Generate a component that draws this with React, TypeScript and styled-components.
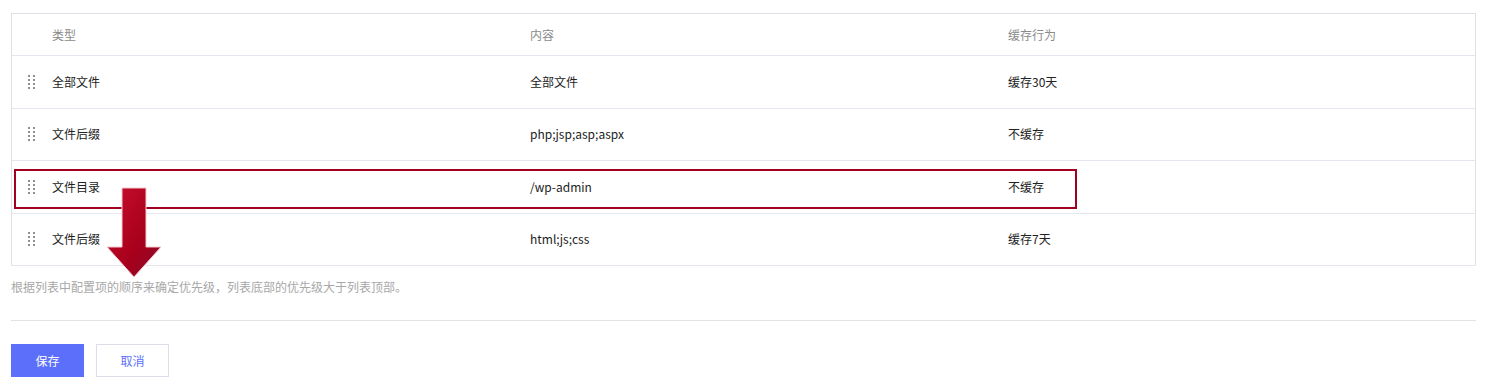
import React from "react";
import styled, { createGlobalStyle } from "styled-components";

const Global = createGlobalStyle`
  html, body { margin: 0; padding: 0; background: #fff; }
  body { font-family: "Noto Sans CJK SC", "Noto Sans", sans-serif; font-size: 12px; color: #222; }
`;

const Page = styled.div`
  position: relative;
  width: 1465px;
  padding: 13px 0 0 11px;
`;

const Table = styled.div`
  border: 1px solid #dfdfe8;
  border-bottom-color: #e6e6ee;
`;

const Row = styled.div<{ $head?: boolean }>`
  display: grid;
  grid-template-columns: 40px 478px 478px 1fr;
  align-items: center;
  height: ${(p) => (p.$head ? "41px" : "51.5px")};
  border-top: ${(p) => (p.$head ? "none" : "1px solid #e6e6ee")};
  color: ${(p) => (p.$head ? "#8a8a8a" : "#222")};
  line-height: 16px;
`;

const Cell = styled.div`
  white-space: nowrap;
`;

const HandleCell = styled.div`
  display: flex;
  justify-content: flex-start;
  padding-left: 16px;
`;

const Dots = styled.div`
  display: grid;
  grid-template-columns: 2px 2px;
  grid-auto-rows: 2px;
  column-gap: 3px;
  row-gap: 2px;
  span { background: #8f8f8f; width: 2px; height: 2px; }
`;

const Hint = styled.div`
  margin-top: 13px;
  color: #a8a8a8;
  line-height: 16px;
`;

const Divider = styled.div`
  margin-top: 25px;
  height: 1px;
  background: #e2e2e2;
`;

const Actions = styled.div`
  display: flex;
  gap: 12px;
  margin-top: 23px;
`;

const Button = styled.button<{ $primary?: boolean }>`
  width: 73px;
  height: 33px;
  box-sizing: border-box;
  font-family: inherit;
  font-size: 12px;
  border: 1px solid ${(p) => (p.$primary ? "#5b6ffb" : "#dcdcea")};
  background: ${(p) => (p.$primary ? "#5b6ffb" : "#fff")};
  color: ${(p) => (p.$primary ? "#fff" : "#5b6ffb")};
  cursor: pointer;
  padding: 0;
`;

const Highlight = styled.div`
  position: absolute;
  left: 14px;
  top: 169px;
  width: 1063px;
  height: 40px;
  box-sizing: border-box;
  border: 2px solid #a3001f;
  pointer-events: none;
`;

const Arrow = styled.svg`
  position: absolute;
  left: 106px;
  top: 187px;
`;

const Handle = () => (
  <Dots>
    {Array.from({ length: 8 }).map((_, i) => (
      <span key={i} />
    ))}
  </Dots>
);

const rows = [
  ["全部文件", "全部文件", "缓存30天"],
  ["文件后缀", "php;jsp;asp;aspx", "不缓存"],
  ["文件目录", "/wp-admin", "不缓存"],
  ["文件后缀", "html;js;css", "缓存7天"],
];

export default function App() {
  return (
    <>
      <Global />
      <Page>
        <Table>
          <Row $head>
            <div />
            <Cell>类型</Cell>
            <Cell>内容</Cell>
            <Cell>缓存行为</Cell>
          </Row>
          {rows.map((r, i) => (
            <Row key={i}>
              <HandleCell>
                <Handle />
              </HandleCell>
              <Cell>{r[0]}</Cell>
              <Cell>{r[1]}</Cell>
              <Cell>{r[2]}</Cell>
            </Row>
          ))}
        </Table>
        <Hint>根据列表中配置项的顺序来确定优先级，列表底部的优先级大于列表顶部。</Hint>
        <Divider />
        <Actions>
          <Button $primary>保存</Button>
          <Button>取消</Button>
        </Actions>
        <Highlight />
        <Arrow width="60" height="92" viewBox="0 0 60 92">
          <defs>
            <linearGradient id="ag" x1="0" y1="0" x2="1" y2="1">
              <stop offset="0" stopColor="#c8102e" />
              <stop offset="0.6" stopColor="#a8001c" />
              <stop offset="1" stopColor="#8a0a2a" />
            </linearGradient>
          </defs>
          <path
            d="M16 1 H40 V60 H55 L28 90 L1 60 H16 Z"
            fill="url(#ag)"
            stroke="#f3c9cf"
            strokeWidth="1"
          />
        </Arrow>
      </Page>
    </>
  );
}
